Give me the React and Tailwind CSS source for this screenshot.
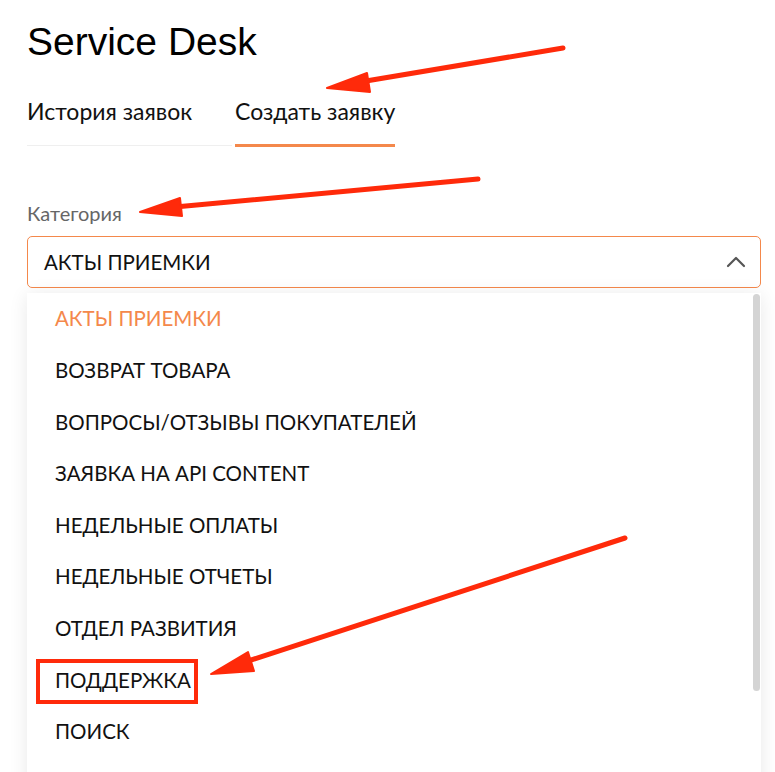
import React from "react";

const items = [
  "АКТЫ ПРИЕМКИ",
  "ВОЗВРАТ ТОВАРА",
  "ВОПРОСЫ/ОТЗЫВЫ ПОКУПАТЕЛЕЙ",
  "ЗАЯВКА НА API CONTENT",
  "НЕДЕЛЬНЫЕ ОПЛАТЫ",
  "НЕДЕЛЬНЫЕ ОТЧЕТЫ",
  "ОТДЕЛ РАЗВИТИЯ",
  "ПОДДЕРЖКА",
  "ПОИСК",
];

export default function App() {
  return (
    <div className="relative h-[772px] w-[775px] overflow-hidden bg-white font-['Lato',sans-serif] text-[#111]">
      <div className="pl-[27px] pr-[15px] pt-[20px]">
        <h1 className="font-['Liberation_Sans',Arial,sans-serif] text-[39px] leading-[44px] text-black">
          Service Desk
        </h1>
        <div className="mt-[33px] flex">
          <div className="flex w-[208px] flex-col">
            <span className="text-[23px] leading-[28px]">История заявок</span>
            <div className="mt-[20px] h-px w-[205px] bg-[#efefef]" />
          </div>
          <div className="flex flex-col">
            <span className="text-[23px] leading-[28px]">Создать заявку</span>
            <div className="mt-[19px] h-[3px] bg-[#f4884b]" />
          </div>
        </div>
        <div className="mt-[54px] text-[20px] leading-[24px] text-[#666]">Категория</div>
        <div className="mt-[11px] flex h-[52px] w-[734px] items-center justify-between rounded-[5px] border border-[#f4884b] pl-[16px] pr-[14px]">
          <span className="text-[20.5px]">АКТЫ ПРИЕМКИ</span>
          <svg width="20" height="12" viewBox="0 0 20 12" fill="none">
            <path d="M2 10 L10 2 L18 10" stroke="#555" strokeWidth="2.2" strokeLinecap="round" strokeLinejoin="round" />
          </svg>
        </div>
        <div className="relative mt-[5px] w-[734px] bg-white pb-[40px] shadow-[0_2px_18px_rgba(0,0,0,0.09)]">
          <ul>
            {items.map((it, i) => (
              <li
                key={it}
                className={`flex h-[51.6px] items-center pl-[28px] text-[20.5px] ${i === 0 ? "text-[#f4884b]" : "text-[#111]"}`}
              >
                {it}
              </li>
            ))}
          </ul>
          <div className="absolute right-[1px] top-[1px] h-[397px] w-[7px] rounded-full bg-[#d4d4d4]" />
        </div>
      </div>

      <svg className="pointer-events-none absolute left-0 top-0" width="775" height="772" viewBox="0 0 775 772">
        <g fill="#ff2a0a" stroke="#ff2a0a" strokeLinecap="round" strokeLinejoin="round">
          <line x1="563" y1="48" x2="360" y2="82" strokeWidth="5" />
          <polygon points="327,88 367,73 370,92" strokeWidth="2" />
          <line x1="478" y1="179" x2="175" y2="207" strokeWidth="5" />
          <polygon points="140,212 180,198 182,216" strokeWidth="2" />
          <line x1="625" y1="538" x2="245" y2="662" strokeWidth="5" />
          <polygon points="211,674 248,652 254,671" strokeWidth="2" />
        </g>
        <rect x="38" y="661" width="158" height="41" fill="none" stroke="#ff2a0a" strokeWidth="4" />
      </svg>
    </div>
  );
}
